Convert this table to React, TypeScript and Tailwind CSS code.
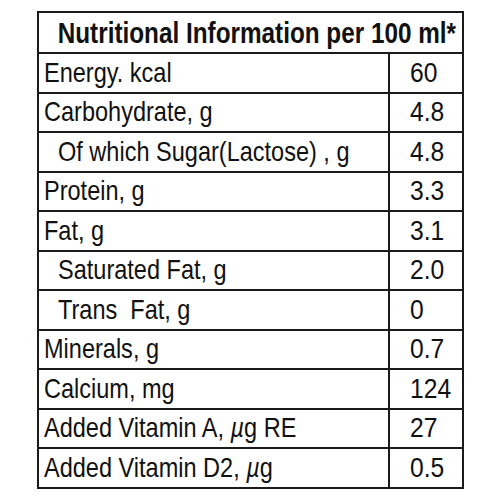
import type { ReactNode } from 'react'

const mu = <span className="italic">{'\u00b5'}</span>

const rows: { label: ReactNode; value: string; indent?: boolean }[] = [
  { label: 'Energy. kcal', value: '60' },
  { label: 'Carbohydrate, g', value: '4.8' },
  { label: 'Of which Sugar(Lactose) , g', value: '4.8', indent: true },
  { label: 'Protein, g', value: '3.3' },
  { label: 'Fat, g', value: '3.1' },
  { label: 'Saturated Fat, g', value: '2.0', indent: true },
  { label: 'Trans  Fat, g', value: '0', indent: true },
  { label: 'Minerals, g', value: '0.7' },
  { label: 'Calcium, mg', value: '124' },
  { label: <>Added Vitamin A, {mu}g RE</>, value: '27' },
  { label: <>Added Vitamin D2, {mu}g</>, value: '0.5' },
]

export default function App() {
  return (
    <div className="w-[500px] h-[500px] bg-white pt-[11px] pl-[37px] text-[#111] font-['Liberation_Sans',Arial,sans-serif]">
      <div className="w-[427px] border-2 border-[#1a1a1a]">
        <div className="h-[39px] flex items-center justify-center pl-3 text-[30px] font-bold leading-none whitespace-pre">
          <span className="inline-block scale-x-[0.81]">Nutritional Information per 100 ml*</span>
        </div>
        {rows.map((r, i) => (
          <div key={i} className="h-[39.5px] flex border-t-2 border-[#1a1a1a] text-[28px] leading-none">
            <div className={`w-[349px] flex items-center whitespace-pre ${r.indent ? 'pl-[19px]' : 'pl-[5px]'}`}>
              <span className="inline-block origin-left scale-x-[0.84]">{r.label}</span>
            </div>
            <div className="flex-1 flex items-center border-l-2 border-[#1a1a1a] pl-[20px]">
              <span className="inline-block origin-left scale-x-[0.88]">{r.value}</span>
            </div>
          </div>
        ))}
      </div>
    </div>
  )
}
